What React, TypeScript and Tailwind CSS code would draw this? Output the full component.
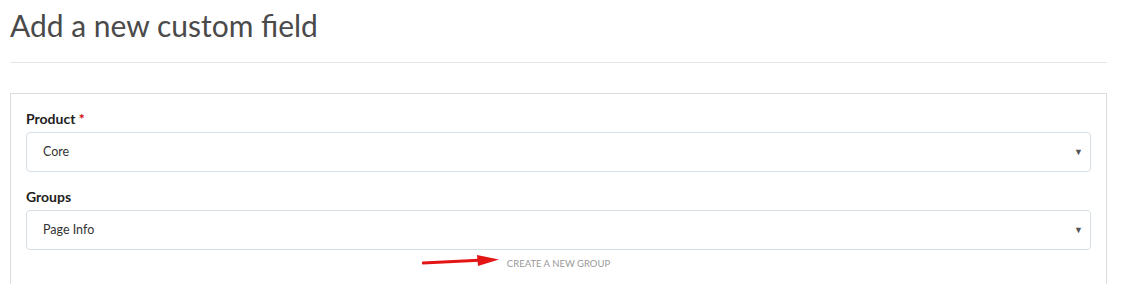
import React from 'react';

const SelectBox: React.FC<{ value: string }> = ({ value }) => (
  <div className="relative flex h-[40px] items-center rounded-[4px] border border-[#d5dfe5] bg-white pl-[16px] text-[12.5px] text-[#333]">
    <span>{value}</span>
    <span className="absolute right-[7px] top-[14px] text-[9px] leading-none text-[#555]">▼</span>
  </div>
);

export default function App() {
  return (
    <div className="min-h-screen bg-white font-['Lato','Liberation_Sans',sans-serif]">
      <div className="ml-[10px] w-[1097px]">
        <h1 className="pt-[6px] text-[30px] font-normal leading-[38px] text-[#4a4a4a]">Add a new custom field</h1>
        <div className="mt-[18px] h-px bg-[#e6e6e6]" />

        <div className="mt-[30px] border border-[#dcdcdc] px-[15px] pt-[15px] pb-[20px]">
          <label className="block text-[14px] font-bold leading-[20px] text-[#222]">
            Product <span className="text-[#c00]">*</span>
          </label>
          <div className="mt-[3px]">
            <SelectBox value="Core" />
          </div>

          <label className="mt-[15px] block text-[14px] font-bold leading-[20px] text-[#222]">Groups</label>
          <div className="mt-[3px]">
            <SelectBox value="Page Info" />
          </div>

          <div className="relative mt-[8px] text-center text-[9.5px] leading-[12px] text-[#999]">
            <svg className="absolute left-[396px] top-[-4px]" width="78" height="14" viewBox="0 0 78 14">
              <line x1="1" y1="9" x2="62" y2="6" stroke="#e31515" strokeWidth="2.8" strokeLinecap="round" />
              <polygon points="55,1 77,5.5 56,12" fill="#e31515" />
            </svg>
            <span>CREATE A NEW GROUP</span>
          </div>
        </div>
      </div>
    </div>
  );
}
